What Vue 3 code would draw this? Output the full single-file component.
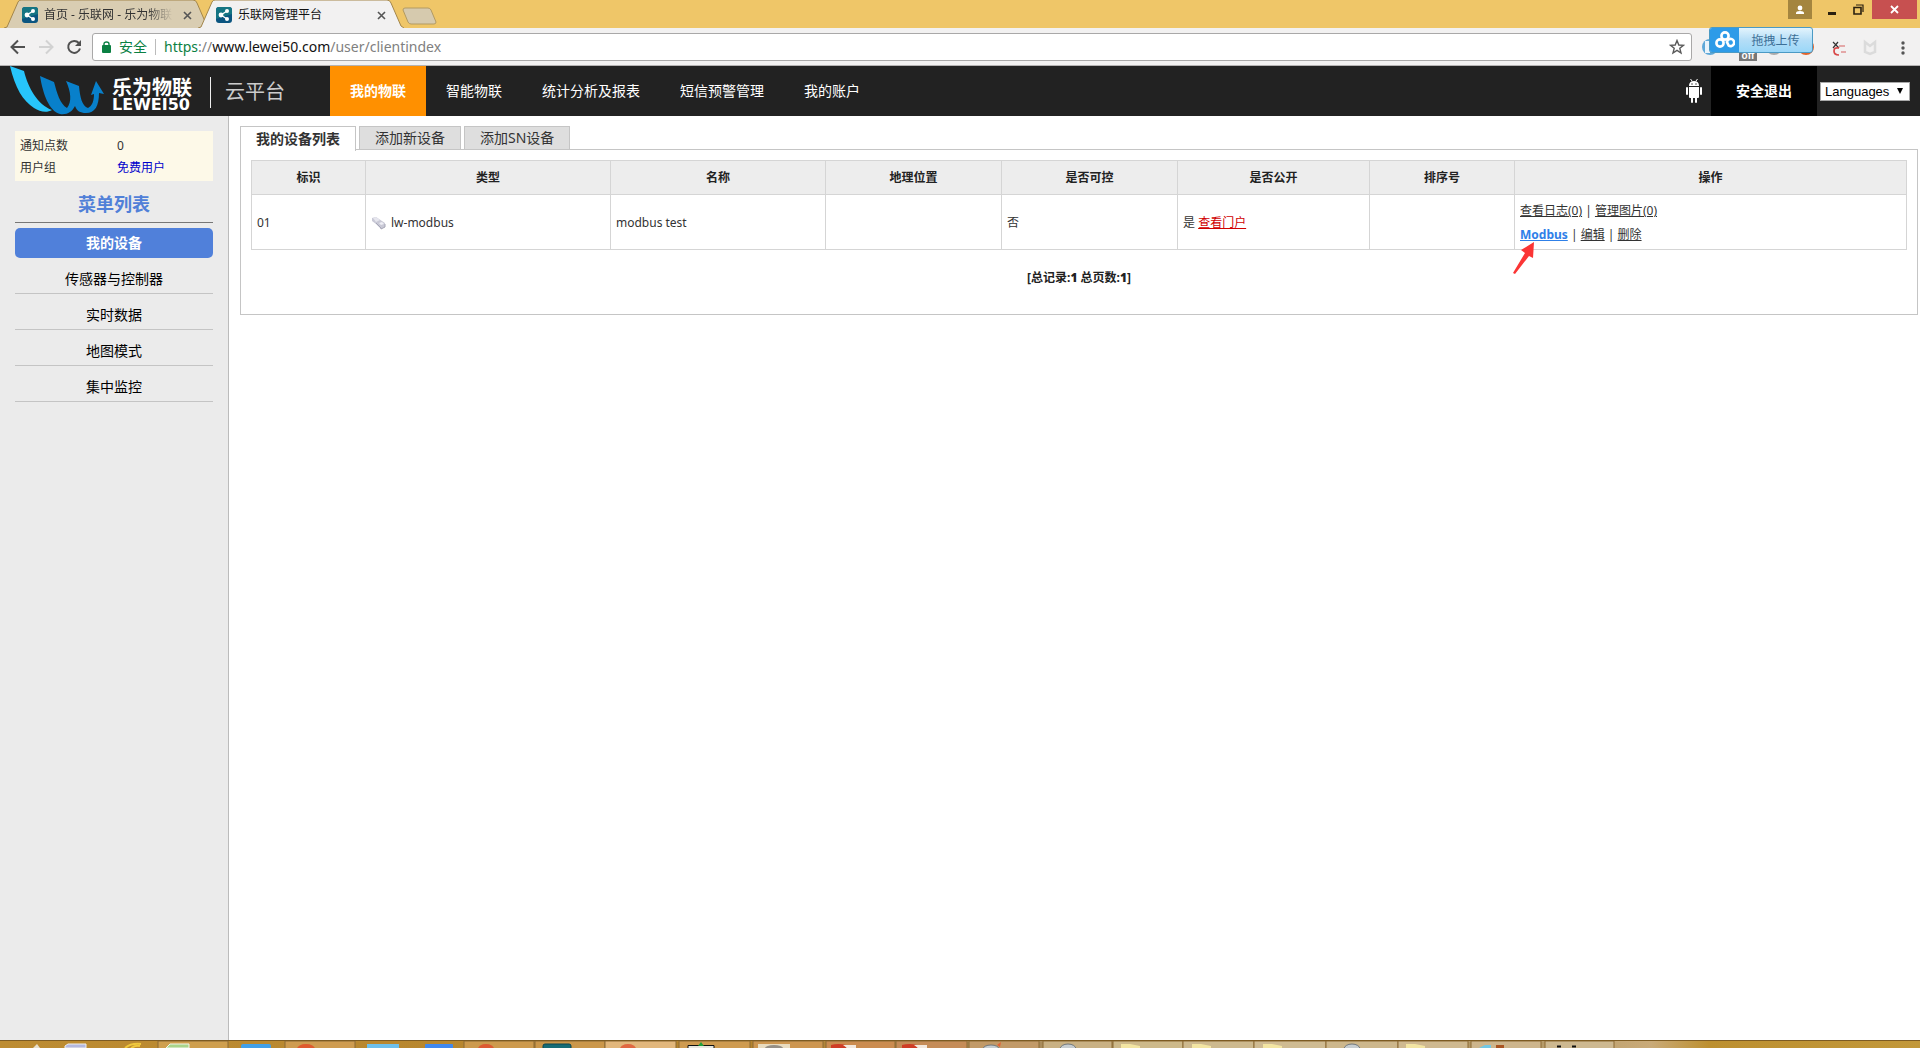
<script setup>
import { ref } from 'vue'

const tabs = [
  { title: '首页 - 乐联网 - 乐为物联', active: false },
  { title: '乐联网管理平台', active: true },
]
const url = ref('/user/clientindex')
const nav = ['我的物联', '智能物联', '统计分析及报表', '短信预警管理', '我的账户']
const menu = ['我的设备', '传感器与控制器', '实时数据', '地图模式', '集中监控']
const pageTabs = ['我的设备列表', '添加新设备', '添加SN设备']
const columns = [
  { name: '标识', cls: 'c-id' },
  { name: '类型', cls: 'c-type' },
  { name: '名称', cls: 'c-name' },
  { name: '地理位置', cls: 'c-mid' },
  { name: '是否可控', cls: 'c-mid' },
  { name: '是否公开', cls: 'c-open' },
  { name: '排序号', cls: 'c-sort' },
  { name: '操作', cls: 'c-ops' },
]
const taskButtons = [
  [158, 70, '#cf9f4e'], [285, 70, '#cf9c50'], [464, 70, '#cd9a4d'], [535, 70, '#cb974a'],
  [605, 71, '#e2b77c'], [679, 71, '#cf9b50'], [753, 70, '#cd9650'], [826, 69, '#cb8c50'],
  [896, 71, '#c58c58'], [969, 70, '#c29a68'], [1043, 69, '#c9b184'], [1113, 70, '#cdb98a'],
  [1183, 71, '#cdb98e'], [1254, 72, '#cfbb92'], [1326, 72, '#cdb78c'], [1398, 70, '#cfb990'],
  [1471, 70, '#cdb58c'], [1545, 69, '#cdb890'],
]
</script>

<template>
  <div class="screen">
    <div class="titlebar">
      <div class="tabs">
        <div v-for="t in tabs" :key="t.title" class="tab" :class="{ active: t.active }">
          <svg class="tab-shape" viewBox="0 0 206 28" preserveAspectRatio="none" aria-hidden="true">
            <path d="M0 28 L3 27 L14 2 Q15 0 17 0 H189 Q192 0 193 3 L203 26 L206 28 Z" :fill="t.active ? '#f2f1f1' : '#d9cdb2'" />
            <path d="M0 28 L3 27 L14 2 Q15 0 17 0 H189 Q192 0 193 3 L203 26 L206 28" fill="none" stroke="#a3864b" />
          </svg>
          <svg class="fav" viewBox="0 0 16 16" aria-hidden="true">
            <rect width="16" height="16" rx="3" fill="#0b5580" />
            <path d="M0 3a3 3 0 0 1 3-3h10a3 3 0 0 1 3 3v4L0 12z" fill="#157583" />
            <path d="M11 4 5 8l6 4" fill="none" stroke="#fff" stroke-width="1.3" />
            <g fill="#fff"><circle cx="11" cy="4" r="2" /><circle cx="5" cy="8" r="2.4" /><circle cx="11" cy="12" r="2" /></g>
          </svg>
          <span class="tab-title">{{ t.title }}</span>
          <button class="icon-btn tab-close" aria-label="关闭标签页">
            <svg width="9" height="9" viewBox="0 0 9 9"><path d="M1 1l7 7M8 1 1 8" stroke="#555" stroke-width="1.6" /></svg>
          </button>
        </div>
        <button class="icon-btn new-tab" aria-label="新标签页">
          <svg width="36" height="18" viewBox="0 0 36 18"><path d="M3 1h23q2 0 3 2l5 12q0 2-2 2H9q-2 0-3-2L1 3q0-2 2-2z" fill="#d6caae" stroke="#b29a62" /></svg>
        </button>
      </div>
      <div class="win">
        <button class="icon-btn person" aria-label="用户">
          <svg width="10" height="10" viewBox="0 0 10 10"><circle cx="5" cy="3" r="2.4" fill="#fff" /><path d="M1 9V8q0-2 4-2t4 2v1z" fill="#fff" /></svg>
        </button>
        <button class="icon-btn min" aria-label="最小化"><svg width="9" height="12" viewBox="0 0 9 12"><path d="M0 9.500h8" stroke="#2a2010" stroke-width="3" /></svg></button>
        <button class="icon-btn max" aria-label="还原">
          <svg width="11" height="11" viewBox="0 0 11 11" fill="none" stroke="#2a2010"><path d="M1 4.500V10h7V3.500H1z" stroke-width="1.6" /><path d="M3 1h7v7" stroke-width="1.2" /></svg>
        </button>
        <button class="icon-btn close" aria-label="关闭"><svg width="9" height="9" viewBox="0 0 9 9"><path d="M1 1l7 7M8 1 1 8" stroke="#fff" stroke-width="1.8" /></svg></button>
      </div>
    </div>

    <div class="toolbar">
      <div class="arrows">
        <button class="icon-btn" aria-label="后退"><svg width="16" height="16" viewBox="0 0 16 16" fill="none" stroke="#505050" stroke-width="2"><path d="M15 8H2M8 1.500 1.500 8 8 14.500" /></svg></button>
        <button class="icon-btn" aria-label="前进"><svg width="16" height="16" viewBox="0 0 16 16" fill="none" stroke="#d2d2d2" stroke-width="2"><path d="M1 8h13M8 1.500 14.500 8 8 14.500" /></svg></button>
        <button class="icon-btn" aria-label="刷新"><svg width="16" height="16" viewBox="0 0 16 16"><path d="M12.800 4A6 6 0 1 0 14 9.500" fill="none" stroke="#505050" stroke-width="2" /><path d="M15 1v6H9z" fill="#505050" /></svg></button>
      </div>
      <div class="address">
        <svg width="9" height="12" viewBox="0 0 9 12" aria-hidden="true"><rect y="4" width="9" height="8" rx="1" fill="#0b8043" /><path d="M2 5V3q0-2 2.500-2T7 3v2" fill="none" stroke="#0b8043" stroke-width="1.400" /></svg>
        <span class="secure">安全</span>
        <span class="bar"></span>
        <span class="url"><span class="scheme">https</span><span class="dim">://</span>www.lewei50.com<span class="dim">{{ url }}</span></span>
        <button class="icon-btn star" aria-label="收藏"><svg width="16" height="16" viewBox="0 0 16 16"><path d="M8 1.500 9.800 6l4.700.3-3.700 3 1.200 4.700L8 11.400 4 14l1.200-4.700-3.700-3L6.200 6z" fill="none" stroke="#5a5a5a" stroke-width="1.400" /></svg></button>
      </div>
      <div class="ext">
        <svg width="228" height="36" viewBox="0 0 228 36" aria-hidden="true">
          <circle cx="18" cy="18" r="8" fill="#5ea8d8" /><rect x="13" y="12" width="5" height="12" fill="#e8f3fb" />
          <circle cx="82" cy="18" r="8" fill="#aaa" /><circle cx="114" cy="18" r="8" fill="#e2642c" />
          <path d="M141 13l6 6M146 13l-5 6" stroke="#333" stroke-width="1.200" />
          <path d="M147 19q-5-1-5 3t5 4" fill="none" stroke="#d84848" stroke-width="1.700" /><path d="M147 17h6M149 23h5" stroke="#e09090" stroke-width="1.500" />
          <path d="M173 23V13l5 4 5-4v10l-5 2z" fill="none" stroke="#dbdbdb" stroke-width="2.500" />
          <g fill="#555"><circle cx="211" cy="14" r="1.700" /><circle cx="211" cy="19" r="1.700" /><circle cx="211" cy="24" r="1.700" /></g>
        </svg>
        <span class="off">off</span>
        <button class="upload">
          <span class="cloud">
            <svg width="20" height="18" viewBox="0 0 20 18" fill="none" stroke="#fff" stroke-width="2.600"><circle cx="10" cy="5" r="3.600" /><circle cx="5" cy="12" r="3.600" /><path d="M11.500 10.200l2.200 4.400a3.600 3.600 0 1 0-1.600-4" /></svg>
          </span>
          <span class="upload-text">拖拽上传</span>
        </button>
      </div>
    </div>

    <header class="site">
      <a href="#" class="brand">
        <svg width="112" height="50" viewBox="0 0 112 50" aria-hidden="true">
          <path d="M10 0l14 5c4 17 14 34 28 39-5 3-12 2-18-2C23 35 15 22 10 0z" fill="#27c5fb" />
          <path d="M40 10l14 6c3 11 6 22 13 26 5-6 4-16-1-27l13 5c1 11 3 20 9 22 4-2 6-7 6-14l-3 1 5-14 8 13-5-1c0 13-4 20-13 20-6 0-9-2-11-7-3 6-8 9-15 8-11-3-17-20-20-38z" fill="#0880cb" />
        </svg>
        <span class="words"><b>乐为物联</b><strong>LEWEI50</strong></span>
        <span class="split"></span>
        <span class="cloud-name">云平台</span>
      </a>
      <nav>
        <a v-for="(n, i) in nav" :key="n" href="#" :class="{ on: i === 0 }">{{ n }}</a>
      </nav>
      <div class="right">
        <svg class="droid" width="16" height="24" viewBox="0 0 16 24" fill="#fff" aria-label="Android">
          <path d="M4.500 0l1.500 2M11.500 0 10 2" stroke="#fff" /><path d="M3 7q0-5 5-5t5 5z" /><path d="M3 8h10v10q0 1-1 1H4q-1 0-1-1z" />
          <rect y="8" width="2" height="8" rx="1" /><rect x="14" y="8" width="2" height="8" rx="1" /><rect x="5" y="17" width="2" height="7" rx="1" /><rect x="9" y="17" width="2" height="7" rx="1" />
          <circle cx="6" cy="5" r=".7" fill="#222" /><circle cx="10" cy="5" r=".7" fill="#222" />
        </svg>
        <a href="#" class="exit">安全退出</a>
        <span class="lang">
          <select aria-label="Languages"><option>Languages</option></select>
          <svg width="6" height="6" viewBox="0 0 6 6" aria-hidden="true"><path d="M0 0h6L3 6z" fill="#000" /></svg>
        </span>
      </div>
    </header>

    <div class="body">
      <aside>
        <dl>
          <div><dt>通知点数</dt><dd>0</dd></div>
          <div><dt>用户组</dt><dd><a href="#">免费用户</a></dd></div>
        </dl>
        <h2>菜单列表</h2>
        <ul>
          <li v-for="(m, i) in menu" :key="m"><a href="#" :class="{ on: i === 0 }">{{ m }}</a></li>
        </ul>
      </aside>
      <main>
        <div class="page-tabs">
          <button v-for="(p, i) in pageTabs" :key="p" :class="{ on: i === 0 }">{{ p }}</button>
        </div>
        <section class="card">
          <table>
            <thead>
              <tr><th v-for="c in columns" :key="c.name" :class="c.cls">{{ c.name }}</th></tr>
            </thead>
            <tbody>
              <tr>
                <td>01</td>
                <td>
                  <span class="type">
                    <svg width="16" height="14" viewBox="0 0 16 14" aria-hidden="true"><path d="M1 2l4-1 9 6v4l-4 2-5-5-4-3z" fill="#c9c9d6" /><path d="M2 2l3-1 4 3-4 2z" fill="#e6e6ee" /><path d="M5 7l5 5v1l4-2V8" fill="none" stroke="#a6a6b6" /><path d="M8 7l3-1 2 2-3 1z" fill="#efeff5" /></svg>
                    lw-modbus
                  </span>
                </td>
                <td>modbus test</td>
                <td></td>
                <td>否</td>
                <td>是 <a href="#" class="red">查看门户</a></td>
                <td></td>
                <td class="ops">
                  <div><a href="#">查看日志(0)</a> | <a href="#">管理图片(0)</a></div>
                  <div><a href="#" class="blue">Modbus</a> | <a href="#">编辑</a> | <a href="#">删除</a></div>
                  <svg class="pointer" width="22" height="32" viewBox="0 0 22 32" aria-hidden="true"><path d="M21 0 8 8l4 3L0 31l2 1 14-18 4 2z" fill="#fb3535" /></svg>
                </td>
              </tr>
            </tbody>
          </table>
          <p class="total">[总记录:<b>1</b> 总页数:<b>1</b>]</p>
        </section>
      </main>
    </div>

    <footer class="taskbar">
      <svg width="1920" height="8" viewBox="0 0 1920 8" aria-hidden="true">
        <defs>
          <linearGradient id="wood"><stop offset="0" stop-color="#bd8c32" /><stop offset=".4" stop-color="#b5832c" /><stop offset=".52" stop-color="#a98b5a" /><stop offset=".8" stop-color="#b59a68" /><stop offset=".86" stop-color="#c9aa78" /><stop offset=".89" stop-color="#bd9030" /><stop offset="1" stop-color="#c2983a" /></linearGradient>
        </defs>
        <rect width="1920" height="8" fill="url(#wood)" />
        <g v-for="b in taskButtons" :key="b[0]"><rect :x="b[0]" y="1" :width="b[1]" height="8" :fill="b[2]" stroke="#8c6a34" /></g>
        <path d="M0 .500h1920" stroke="#7d5b22" />
        <path d="M33 8l4-4 3 4z" fill="#e8e0cc" />
        <path d="M65 8V6l3-2h18v4z" fill="#b4b8de" stroke="#eee" /><path d="M125 8q6-5 16-4M131 8q5-3 9-2" fill="none" stroke="#f0c83c" stroke-width="2" />
        <path d="M166 8l4-4h19v4z" fill="#a9d48a" stroke="#f0f6ea" />
        <rect x="241" y="4" width="30" height="5" rx="2" fill="#42a0e8" /><ellipse cx="306" cy="9" rx="9" ry="5" fill="#df5a2e" />
        <rect x="367" y="4" width="32" height="4" fill="#6ec0ec" /><rect x="425" y="4" width="28" height="5" rx="1" fill="#4088ee" />
        <ellipse cx="486" cy="9" rx="8" ry="5" fill="#dd5a32" /><rect x="543" y="4" width="28" height="6" rx="2" fill="#166c76" stroke="#0b4650" />
        <ellipse cx="628" cy="9" rx="8" ry="5" fill="#e06842" />
        <path d="M688 8V5.500h26V8" fill="#e8e8e0" stroke="#111" /><path d="M698 6l3-4 3 4z" fill="#1fa03b" />
        <rect x="758" y="4" width="32" height="4" fill="#e9dcc0" /><ellipse cx="774" cy="8" rx="9" ry="3" fill="#958f86" />
        <path d="M831 8V5q7-2 15 0v3M902 8V5q7-2 15 0v3" fill="#cf3d26" /><path d="M843 5h13v3h-9zM914 5h13v3h-9z" fill="#f3e9df" />
        <g fill="#c7cdd0" stroke="#70777c"><ellipse cx="991" cy="9" rx="8" ry="4" /><ellipse cx="1068" cy="9" rx="8" ry="5" /><ellipse cx="1352" cy="9" rx="8" ry="5" /></g>
        <path d="M997 5l4-3-1 5" fill="#e36334" />
        <g fill="#f3e5a3"><path d="M1121 4h9l10 2v2h-19z" /><path d="M1192 4h9l10 2v2h-19z" /><path d="M1263 4h9l10 2v2h-19z" /><path d="M1406 4h9l10 2v2h-19z" /></g>
        <path d="M1479 8l6-3h6v3z" fill="#72c8e5" /><path d="M1496 5h8v3h-8z" fill="#aa5421" /><path d="M1557 6.500h4M1572 6.500h4" stroke="#111" stroke-width="2" />
      </svg>
      <span class="clock">10:39</span>
    </footer>
  </div>
</template>

<style>
body { margin: 0; }
</style>

<style scoped>
.screen { min-height: 100vh; display: flex; flex-direction: column; background: #fff; color: #333; font: 12px/20px "Noto Sans", "Noto Sans CJK SC", sans-serif; overflow: hidden; }
.screen * { box-sizing: border-box; }
svg { display: block; flex: none; }
a { color: inherit; text-decoration: none; }
.icon-btn { border: 0; padding: 0; background: none; display: flex; align-items: center; justify-content: center; }

.titlebar { height: 28px; display: flex; justify-content: space-between; background: #efc668; }
.tabs { display: flex; padding-left: 4px; }
.tab { position: relative; width: 206px; height: 28px; margin-right: -12px; padding: 2px 18px 0; display: flex; align-items: center; gap: 6px; color: #333; }
.tab.active { z-index: 1; color: #111; }
.tab-shape { position: absolute; inset: 0; width: 100%; height: 28px; }
.fav { width: 16px; height: 16px; position: relative; }
.tab-title { flex: 1; position: relative; overflow: hidden; white-space: nowrap; margin-right: 4px; }
.tab:not(.active) .tab-title { -webkit-mask-image: linear-gradient(90deg, #000 80%, transparent); mask-image: linear-gradient(90deg, #000 80%, transparent); }
.tab-close { position: relative; }
.new-tab { margin: 7px 0 0 10px; height: 18px; }
.win { display: flex; align-items: flex-start; padding-right: 3px; }
.person { width: 24px; height: 19px; background: #a4853f; }
.min { width: 32px; height: 19px; margin-left: 4px; }
.max { width: 20px; height: 19px; }
.close { width: 45px; height: 19px; margin-left: 4px; background: #c75050; }

.toolbar { height: 38px; display: flex; align-items: center; background: #f2f1f1; border-bottom: 1px solid #b5b3b3; }
.arrows { display: flex; gap: 12px; padding: 0 10px; }
.address { flex: 1; height: 28px; display: flex; align-items: center; padding: 0 6px 0 9px; background: #fff; border: 1px solid #a9a8a8; border-radius: 3px; font-size: 14px; }
.secure { margin-left: 8px; color: #0b8043; }
.bar { width: 1px; height: 16px; margin: 0 8px; background: #bbb; }
.url { color: #111; }
.scheme { color: #0b8043; }
.dim { color: #808080; }
.star { margin-left: auto; }
.ext { position: relative; width: 228px; }
.off { position: absolute; right: 163px; top: 22px; width: 18px; height: 10px; background: #777; color: #fff; font: bold 10px/10px "Liberation Sans", sans-serif; text-align: center; }
.upload { position: absolute; right: 107px; top: -2px; width: 104px; height: 26px; padding: 0; display: flex; border: 1px solid #4b9ac4; border-radius: 3px; overflow: hidden; background: linear-gradient(#e3f4fd, #b5def7 50%, #9ad7f8); font: 12px/26px "Noto Sans", "Noto Sans CJK SC", sans-serif; color: #3c6f96; }
.cloud { width: 29px; height: 24px; display: flex; align-items: center; justify-content: center; background: #2d9be8; }
.upload-text { flex: 1; text-align: center; }

.site { height: 50px; display: flex; background: #222; color: #fff; font-size: 14px; }
.brand { width: 330px; display: flex; align-items: center; }
.words { width: 85px; padding-top: 7px; display: flex; flex-direction: column; }
.words b { font-size: 20px; line-height: 20px; white-space: nowrap; }
.words strong { font: bold 16px/14px "DejaVu Sans", sans-serif; }
.split { width: 1px; height: 31px; margin: 3px 14px 0 13px; background: #eee; }
.cloud-name { padding-top: 2px; font-size: 20px; color: #ccc; }
nav { display: flex; flex: 1; }
nav a { padding: 0 20px; line-height: 50px; white-space: nowrap; }
nav a.on { background: #ff9000; font-weight: bold; }
.right { display: flex; align-items: center; padding-right: 10px; }
.droid { margin-right: 9px; }
.exit { width: 106px; margin-right: 3px; background: #000; text-align: center; font-weight: bold; line-height: 50px; }
.lang { position: relative; width: 90px; height: 19px; }
.lang select { appearance: none; width: 90px; height: 19px; padding: 0 4px; background: #fff; border: 1px solid #a9a9a9; border-radius: 0; color: #000; font: 13px/17px "Liberation Sans", sans-serif; display: block; }
.lang svg { position: absolute; right: 7px; top: 6px; pointer-events: none; }

.body { flex: 1; display: flex; }
aside { width: 229px; padding: 15px 15px 0; background: #ebebeb; border-right: 1px solid #bbb; }
dl { margin: 0; padding: 4px 5px 2px; background: #fdf9e8; }
dl div { display: flex; height: 22px; line-height: 22px; }
dt { width: 97px; }
dd { margin: 0; }
dd a { color: #0000cc; }
h2 { margin: 0; padding: 7px 0 2px; border-bottom: 1px solid #777; text-align: center; color: #5080d8; font-size: 18px; line-height: 32px; }
ul { list-style: none; margin: 0; padding: 5px 0 0; }
li { font-size: 14px; text-align: center; color: #000; }
li a { display: block; height: 36px; padding-top: 6px; line-height: 30px; border-bottom: 1px solid #c4c4c4; }
li a.on { height: 30px; padding: 0; border: 0; border-radius: 5px; background: #5080da; color: #fff; font-weight: bold; }

main { flex: 1; min-width: 0; padding: 10px 2px 0 11px; }
.page-tabs { display: flex; gap: 3px; }
.page-tabs button { height: 24px; padding: 0 15px; border: 1px solid #c5c5c5; background: #dedede; color: #333; font: 14px/22px "Noto Sans", "Noto Sans CJK SC", sans-serif; }
.page-tabs button.on { position: relative; height: 25px; margin-bottom: -1px; border-bottom: 0; background: #fff; font-weight: bold; }
.card { padding: 10px; border: 1px solid #c5c5c5; margin-top: -1px; }
table { width: 100%; table-layout: fixed; border-collapse: collapse; }
th, td { border: 1px solid #d5d5d5; }
th { height: 34px; padding: 0; background: #ededed; color: #222; }
td { height: 55px; padding: 2px 5px 0; }
.c-id { width: 114px; }
.c-type { width: 245px; }
.c-name { width: 215px; }
.c-mid { width: 176px; }
.c-open { width: 192px; }
.c-sort { width: 145px; }
.type { display: flex; align-items: center; gap: 4px; }
.red { color: #d00000; text-decoration: underline; }
.ops { position: relative; line-height: 24px; }
.ops a { text-decoration: underline; }
.ops .blue { color: #2f80e8; font-weight: bold; }
.pointer { position: absolute; left: -2px; top: 47px; }
.total { margin: 0; padding: 18px 0 16px; text-align: center; font-weight: bold; color: #222; }

.taskbar { position: relative; height: 8px; overflow: hidden; background: #c2983a; }
.clock { position: absolute; right: 37px; top: 3px; color: #fff; }
</style>
